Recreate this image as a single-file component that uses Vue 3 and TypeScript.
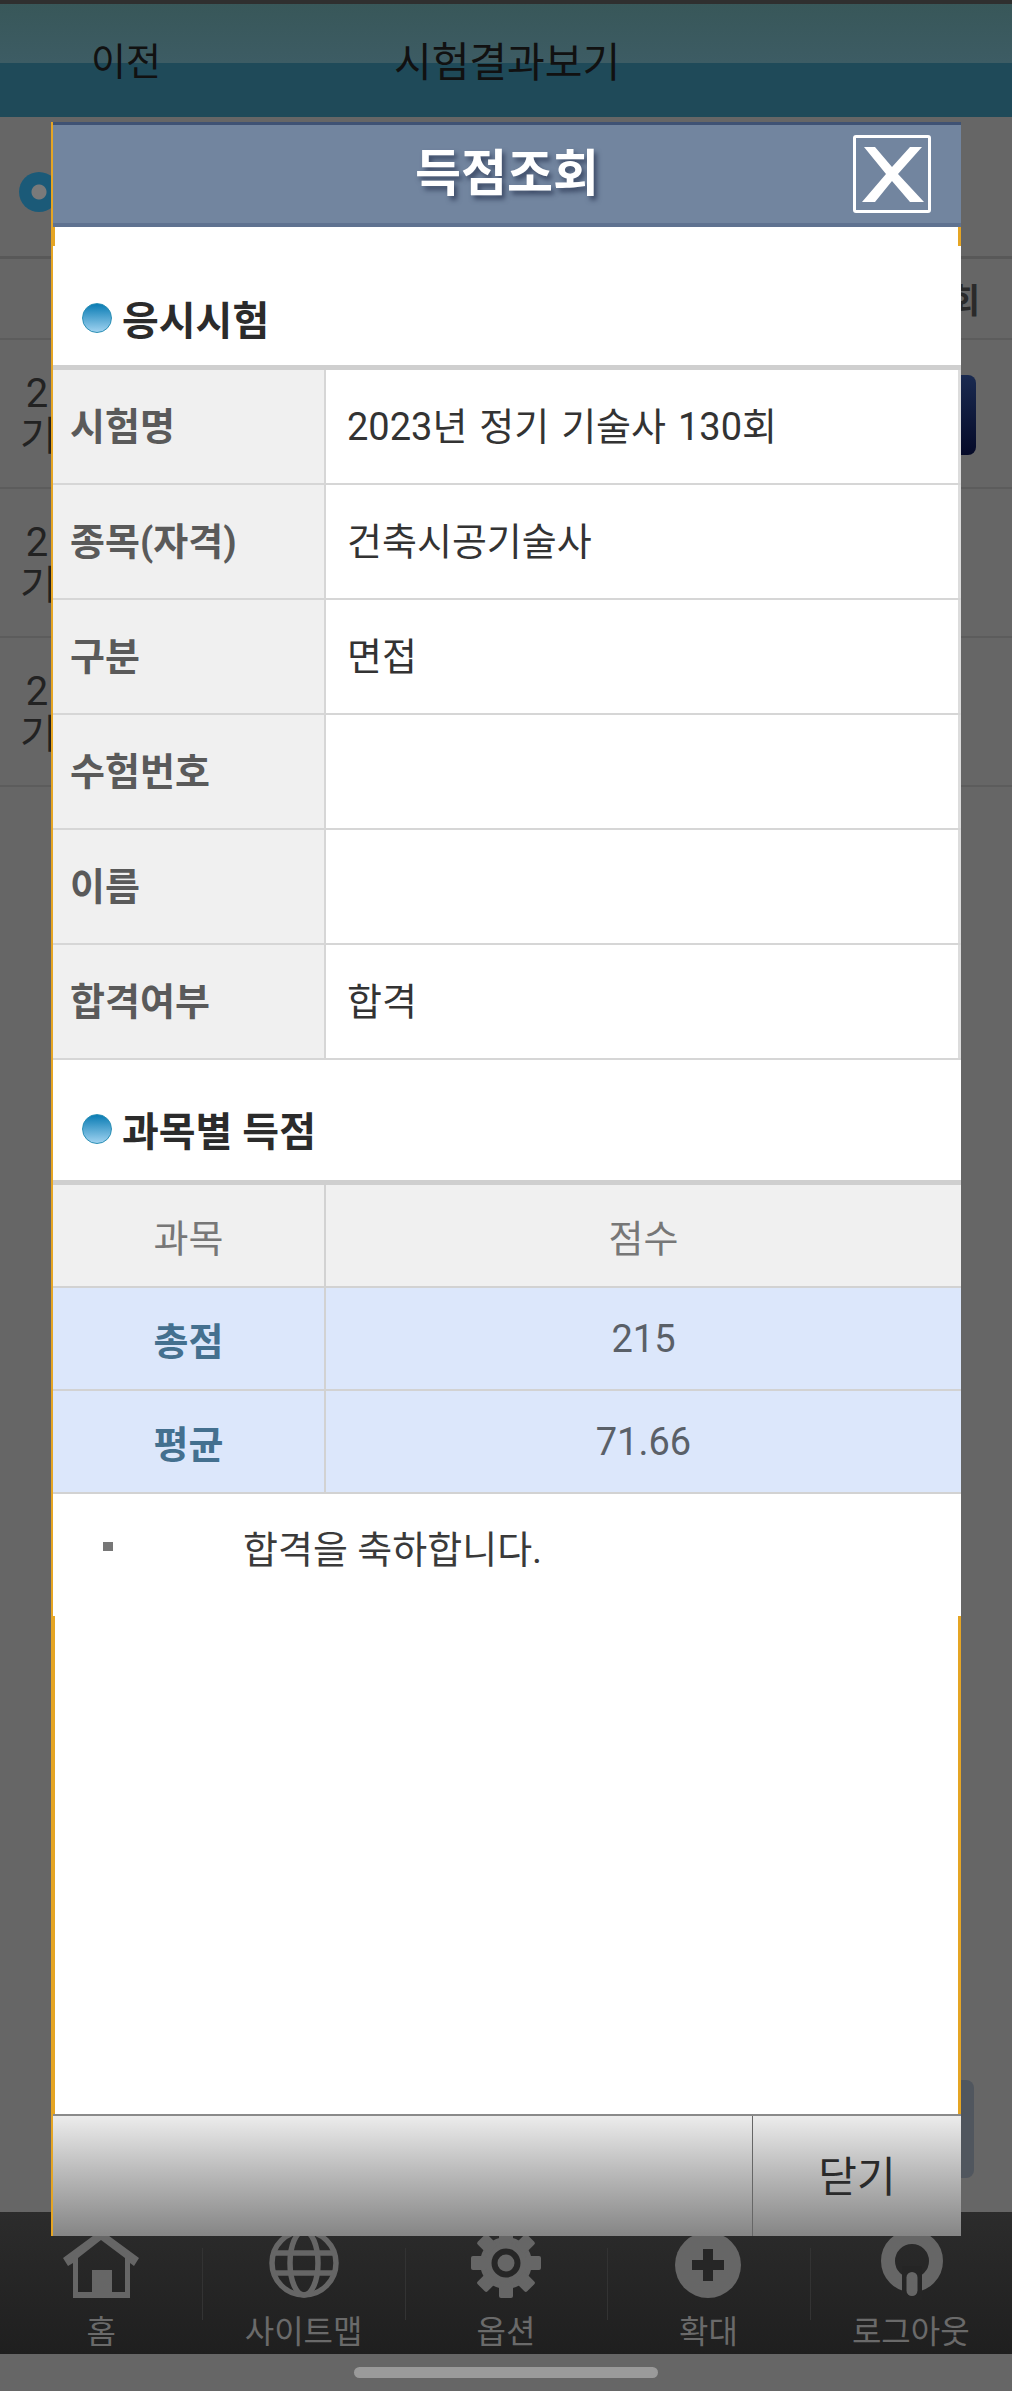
<script setup lang="ts">
interface InfoRow {
  label: string
  value: string
}
interface ScoreRow {
  name: string
  score: string
}

const infoRows: InfoRow[] = [
  { label: '시험명', value: '2023년 정기 기술사 130회' },
  { label: '종목(자격)', value: '건축시공기술사' },
  { label: '구분', value: '면접' },
  { label: '수험번호', value: '' },
  { label: '이름', value: '' },
  { label: '합격여부', value: '합격' },
]

const scoreRows: ScoreRow[] = [
  { name: '총점', score: '215' },
  { name: '평균', score: '71.66' },
]

const footerItems = ['홈', '사이트맵', '옵션', '확대', '로그아웃']
// 기어 톱니
const gearTeeth = [0, 45, 90, 135, 180, 225, 270, 315]
</script>

<template>
  <div class="page">
    <header class="topbar">
      <span class="back">이전</span>
      <span class="page-title">시험결과보기</span>
    </header>

    <!-- 모달 뒤 화면 -->
    <main class="behind">
      <div class="behind-head">
        <span class="ring"></span>
      </div>
      <div class="behind-cols"><span>회</span></div>
      <div v-for="n in 3" :key="n" class="behind-row">
        <span class="behind-text">2<br />기</span>
        <span v-if="n === 1" class="behind-btn"></span>
      </div>
      <div class="behind-rest"><span class="behind-btn2"></span></div>
    </main>

    <nav class="footer">
      <div v-for="(item, i) in footerItems" :key="item" class="foot-item">
        <svg class="foot-icon" viewBox="0 0 84 84">
          <g v-if="i === 0" fill="#666">
            <path
              d="M42 14 L80 42 L75 50 L71 47 V82 H14 V47 L9 50 L4 42 Z M42 24 L19 42 V76 H33 V54 H53 V76 H66 V42 Z"
              fill-rule="evenodd"
            />
          </g>
          <g v-else-if="i === 1" fill="none" stroke="#666" stroke-width="5.5">
            <circle cx="42" cy="47" r="32" />
            <ellipse cx="42" cy="47" rx="14" ry="32" />
            <path d="M12 37 H72 M12 57 H72" />
          </g>
          <g v-else-if="i === 2">
            <circle cx="42" cy="47" r="26" fill="#666" />
            <rect
              v-for="a in gearTeeth"
              :key="a"
              x="35"
              y="12"
              width="14"
              height="16"
              rx="2"
              fill="#666"
              :transform="`rotate(${a} 42 47)`"
            />
            <circle cx="42" cy="47" r="11.5" fill="none" stroke="#262626" stroke-width="6" />
          </g>
          <g v-else-if="i === 3">
            <circle cx="42" cy="49" r="33" fill="#666" />
            <path d="M42 33 V65 M26 49 H58" stroke="#262626" stroke-width="10" />
          </g>
          <g v-else>
            <circle cx="43" cy="45" r="24" fill="none" stroke="#666" stroke-width="14" />
            <rect x="33" y="50" width="20" height="34" fill="#252525" />
            <rect x="37.5" y="56" width="11" height="24" rx="5.5" fill="#666" />
          </g>
        </svg>
        <span class="foot-label">{{ item }}</span>
      </div>
    </nav>

    <div class="gesture"><span class="pill"></span></div>

    <!-- 득점조회 모달 -->
    <section class="modal">
      <span class="gold gold-top"></span>
      <span class="gold gold-bottom"></span>
      <span class="gold gold-left-top"></span>
      <span class="gold gold-left-bottom"></span>
      <div class="modal-head">
        <h2>득점조회</h2>
        <button class="close-x" aria-label="닫기">
          <svg viewBox="3 3 72 72" width="72" height="72">
            <path d="M11 12 H22 L39 32 L57 12 H69 L45 39 L71 67 H57 L39 46 L22 67 H9 L33 39 Z" fill="#fff" />
          </svg>
        </button>
      </div>

      <div class="modal-body">
        <h3 class="sec-title first"><i class="dot"></i>응시시험</h3>
        <div class="info-table">
          <div v-for="row in infoRows" :key="row.label" class="info-row">
            <div class="info-label">{{ row.label }}</div>
            <div class="info-value">{{ row.value }}</div>
          </div>
        </div>

        <h3 class="sec-title second"><i class="dot"></i>과목별 득점</h3>
        <div class="score-table">
          <div class="score-row score-head">
            <div class="score-name">과목</div>
            <div class="score-val">점수</div>
          </div>
          <div v-for="row in scoreRows" :key="row.name" class="score-row">
            <div class="score-name strong">{{ row.name }}</div>
            <div class="score-val">{{ row.score }}</div>
          </div>
        </div>
        <p class="notice"><i class="bullet"></i>합격을 축하합니다.</p>
      </div>

      <div class="modal-foot">
        <div class="foot-space"></div>
        <div class="foot-close">닫기</div>
      </div>
    </section>
  </div>
</template>

<style scoped>
.page {
  position: relative;
  width: 1012px;
  height: 2391px;
  display: flex;
  flex-direction: column;
  overflow: hidden;
  background: #666;
  border-top: 4px solid #2f2f2f;
  box-sizing: border-box;
  font-family: Roboto, 'Noto Sans CJK KR', sans-serif;
}

/* 상단 바 */
.topbar {
  height: 113px;
  flex-shrink: 0;
  display: flex;
  align-items: center;
  background: linear-gradient(#385759 0, #3d5c64 52%, #1f4a59 52%, #1f4a59 100%);
  color: #111;
  font-size: 38px;
  box-sizing: border-box;
  padding-bottom: 4px;
}
.back {
  margin-left: 91px;
}
.page-title {
  margin-left: 233px;
  font-size: 41px;
}

/* 뒤 화면 */
.behind {
  flex: 1;
  display: flex;
  flex-direction: column;
  min-height: 0;
}
.behind-head {
  height: 142px;
  flex-shrink: 0;
  padding: 55px 0 0 19px;
  box-sizing: border-box;
  border-bottom: 3px solid #585858;
}
.ring {
  display: block;
  width: 40px;
  height: 40px;
  border-radius: 50%;
  background: radial-gradient(circle, #7a7a7a 0 7px, #1b5a78 8px);
}
.behind-cols {
  height: 81px;
  flex-shrink: 0;
  border-bottom: 2px solid #5c5c5c;
  display: flex;
  justify-content: flex-end;
  align-items: center;
  font-size: 34px;
  font-weight: 700;
  color: #2a2a2a;
  padding-right: 32px;
  box-sizing: border-box;
}
.behind-row {
  height: 149px;
  flex-shrink: 0;
  border-bottom: 2px solid #5c5c5c;
  box-sizing: border-box;
  position: relative;
  padding: 32px 0 0 20px;
  font-size: 40px;
  line-height: 43px;
  color: #222;
}
.behind-text {
  display: block;
  width: 34px;
  text-align: center;
}
.behind-btn {
  position: absolute;
  right: 36px;
  top: 35px;
  width: 60px;
  height: 80px;
  border-radius: 8px;
  background: linear-gradient(#1a2a50, #050a28);
}
.behind-rest {
  flex: 1;
  position: relative;
}
.behind-btn2 {
  position: absolute;
  right: 38px;
  top: 1293px;
  width: 60px;
  height: 98px;
  border-radius: 8px;
  background: #50565e;
}

/* 하단 메뉴 */
.footer {
  height: 142px;
  flex-shrink: 0;
  display: grid;
  grid-template-columns: repeat(5, 1fr);
  background: linear-gradient(#2c2c2c, #1f1f1f);
  color: #6a6a6a;
}
.foot-item {
  display: flex;
  flex-direction: column;
  align-items: center;
  position: relative;
  padding-top: 4px;
}
.foot-item + .foot-item::before {
  content: '';
  position: absolute;
  left: 0;
  top: 36px;
  height: 72px;
  width: 1px;
  background: #333;
}
.foot-icon {
  width: 84px;
  height: 84px;
  flex-shrink: 0;
}
.foot-label {
  font-size: 32px;
  line-height: 40px;
  margin-top: 12px;
  white-space: nowrap;
}
.gesture {
  height: 37px;
  flex-shrink: 0;
  display: flex;
  justify-content: center;
  padding-top: 13px;
  box-sizing: border-box;
}
.pill {
  width: 304px;
  height: 11px;
  border-radius: 6px;
  background: #9a9a9a;
}

/* 모달 */
.modal {
  position: absolute;
  left: 51px;
  top: 118px;
  width: 910px;
  height: 2114px;
  display: flex;
  flex-direction: column;
  background: #fff;
  border-left: 2px solid #e5a524;
  box-sizing: border-box;
}
.gold {
  position: absolute;
  background: #e5a524;
}
.gold-top {
  right: 0;
  width: 3px;
  top: 100px;
  height: 24px;
}
.gold-bottom {
  right: 0;
  width: 3px;
  top: 1494px;
  height: 498px;
}
.gold-left-top {
  left: -2px;
  width: 4px;
  top: 100px;
  height: 24px;
}
.gold-left-bottom {
  left: -2px;
  width: 4px;
  top: 1494px;
  height: 498px;
}
.modal-head {
  height: 105px;
  flex-shrink: 0;
  display: flex;
  align-items: center;
  justify-content: center;
  position: relative;
  background: #72859f;
  border-top: 3px solid #3f5274;
  border-bottom: 4px solid #5f7290;
  box-sizing: border-box;
  padding-bottom: 10px;
}
.modal-head h2 {
  margin: 0;
  font-size: 50px;
  font-weight: 700;
  color: #fff;
  text-shadow: 3px 4px 5px #3c4a66;
}
.close-x {
  position: absolute;
  right: 30px;
  top: 10px;
  width: 78px;
  height: 78px;
  padding: 0;
  background: transparent;
  border: 3px solid #fff;
  border-radius: 3px;
  box-sizing: border-box;
  display: flex;
  overflow: hidden;
}
.modal-body {
  flex: 1;
  min-height: 0;
}
.sec-title {
  display: flex;
  align-items: center;
  margin: 0;
  font-size: 40px;
  font-weight: 700;
  color: #2b2b2b;
  padding-left: 29px;
  box-sizing: border-box;
}
.sec-title.first {
  height: 138px;
  padding-top: 44px;
}
.sec-title.second {
  height: 120px;
  padding-top: 18px;
}
.dot {
  width: 30px;
  height: 30px;
  border-radius: 50%;
  margin-right: 10px;
  background: linear-gradient(#0a7cb4, #9fd2f0);
  border: 1px solid #2a8fb5;
  box-sizing: border-box;
}
.info-table,
.score-table {
  border-top: 5px solid #cfcfcf;
}
.info-row {
  display: flex;
  height: 115px;
  border-bottom: 2px solid #d6d6d6;
  box-sizing: border-box;
  font-size: 38px;
}
.info-label {
  width: 273px;
  flex-shrink: 0;
  display: flex;
  align-items: center;
  padding: 0 0 6px 17px;
  box-sizing: border-box;
  background: #f0f0f0;
  border-right: 2px solid #d6d6d6;
  font-weight: 700;
  color: #5a5a5a;
}
.info-value {
  flex: 1;
  display: flex;
  align-items: center;
  padding: 0 0 6px 21px;
  color: #333;
  border-right: 3px solid #dcdcdc;
  word-spacing: 2.5px;
}
.score-row {
  display: flex;
  height: 103px;
  font-size: 38px;
  background: #dce7fb;
  border-bottom: 2px solid #d2d2d2;
  box-sizing: border-box;
  text-align: center;
  color: #5a6068;
}
.score-row.score-head {
  background: #f0f0f0;
  color: #777;
  padding-bottom: 0;
}
.score-name {
  width: 273px;
  flex-shrink: 0;
  border-right: 2px solid #d2d2d2;
  box-sizing: border-box;
  display: flex;
  align-items: center;
  justify-content: center;
}
.score-name.strong {
  font-weight: 700;
  color: #44708f;
}
.score-val {
  flex: 1;
  display: flex;
  align-items: center;
  justify-content: center;
}
.notice {
  margin: 0;
  display: flex;
  align-items: center;
  height: 106px;
  font-size: 38px;
  color: #3a3a3a;
  padding: 0 0 2px 50px;
  box-sizing: border-box;
}
.bullet {
  width: 10px;
  height: 9px;
  background: #777;
  margin-right: 130px;
}
.modal-foot {
  height: 122px;
  flex-shrink: 0;
  display: flex;
  border-top: 2px solid #8a8a8a;
  box-sizing: border-box;
  background: linear-gradient(#ececec, #bcbcbc 45%, #858585 100%);
}
.foot-space {
  width: 699px;
  border-right: 1px solid #666;
}
.foot-close {
  flex: 1;
  display: flex;
  align-items: center;
  justify-content: center;
  font-size: 42px;
  color: #2a2a2a;
  padding-bottom: 6px;
}
</style>
